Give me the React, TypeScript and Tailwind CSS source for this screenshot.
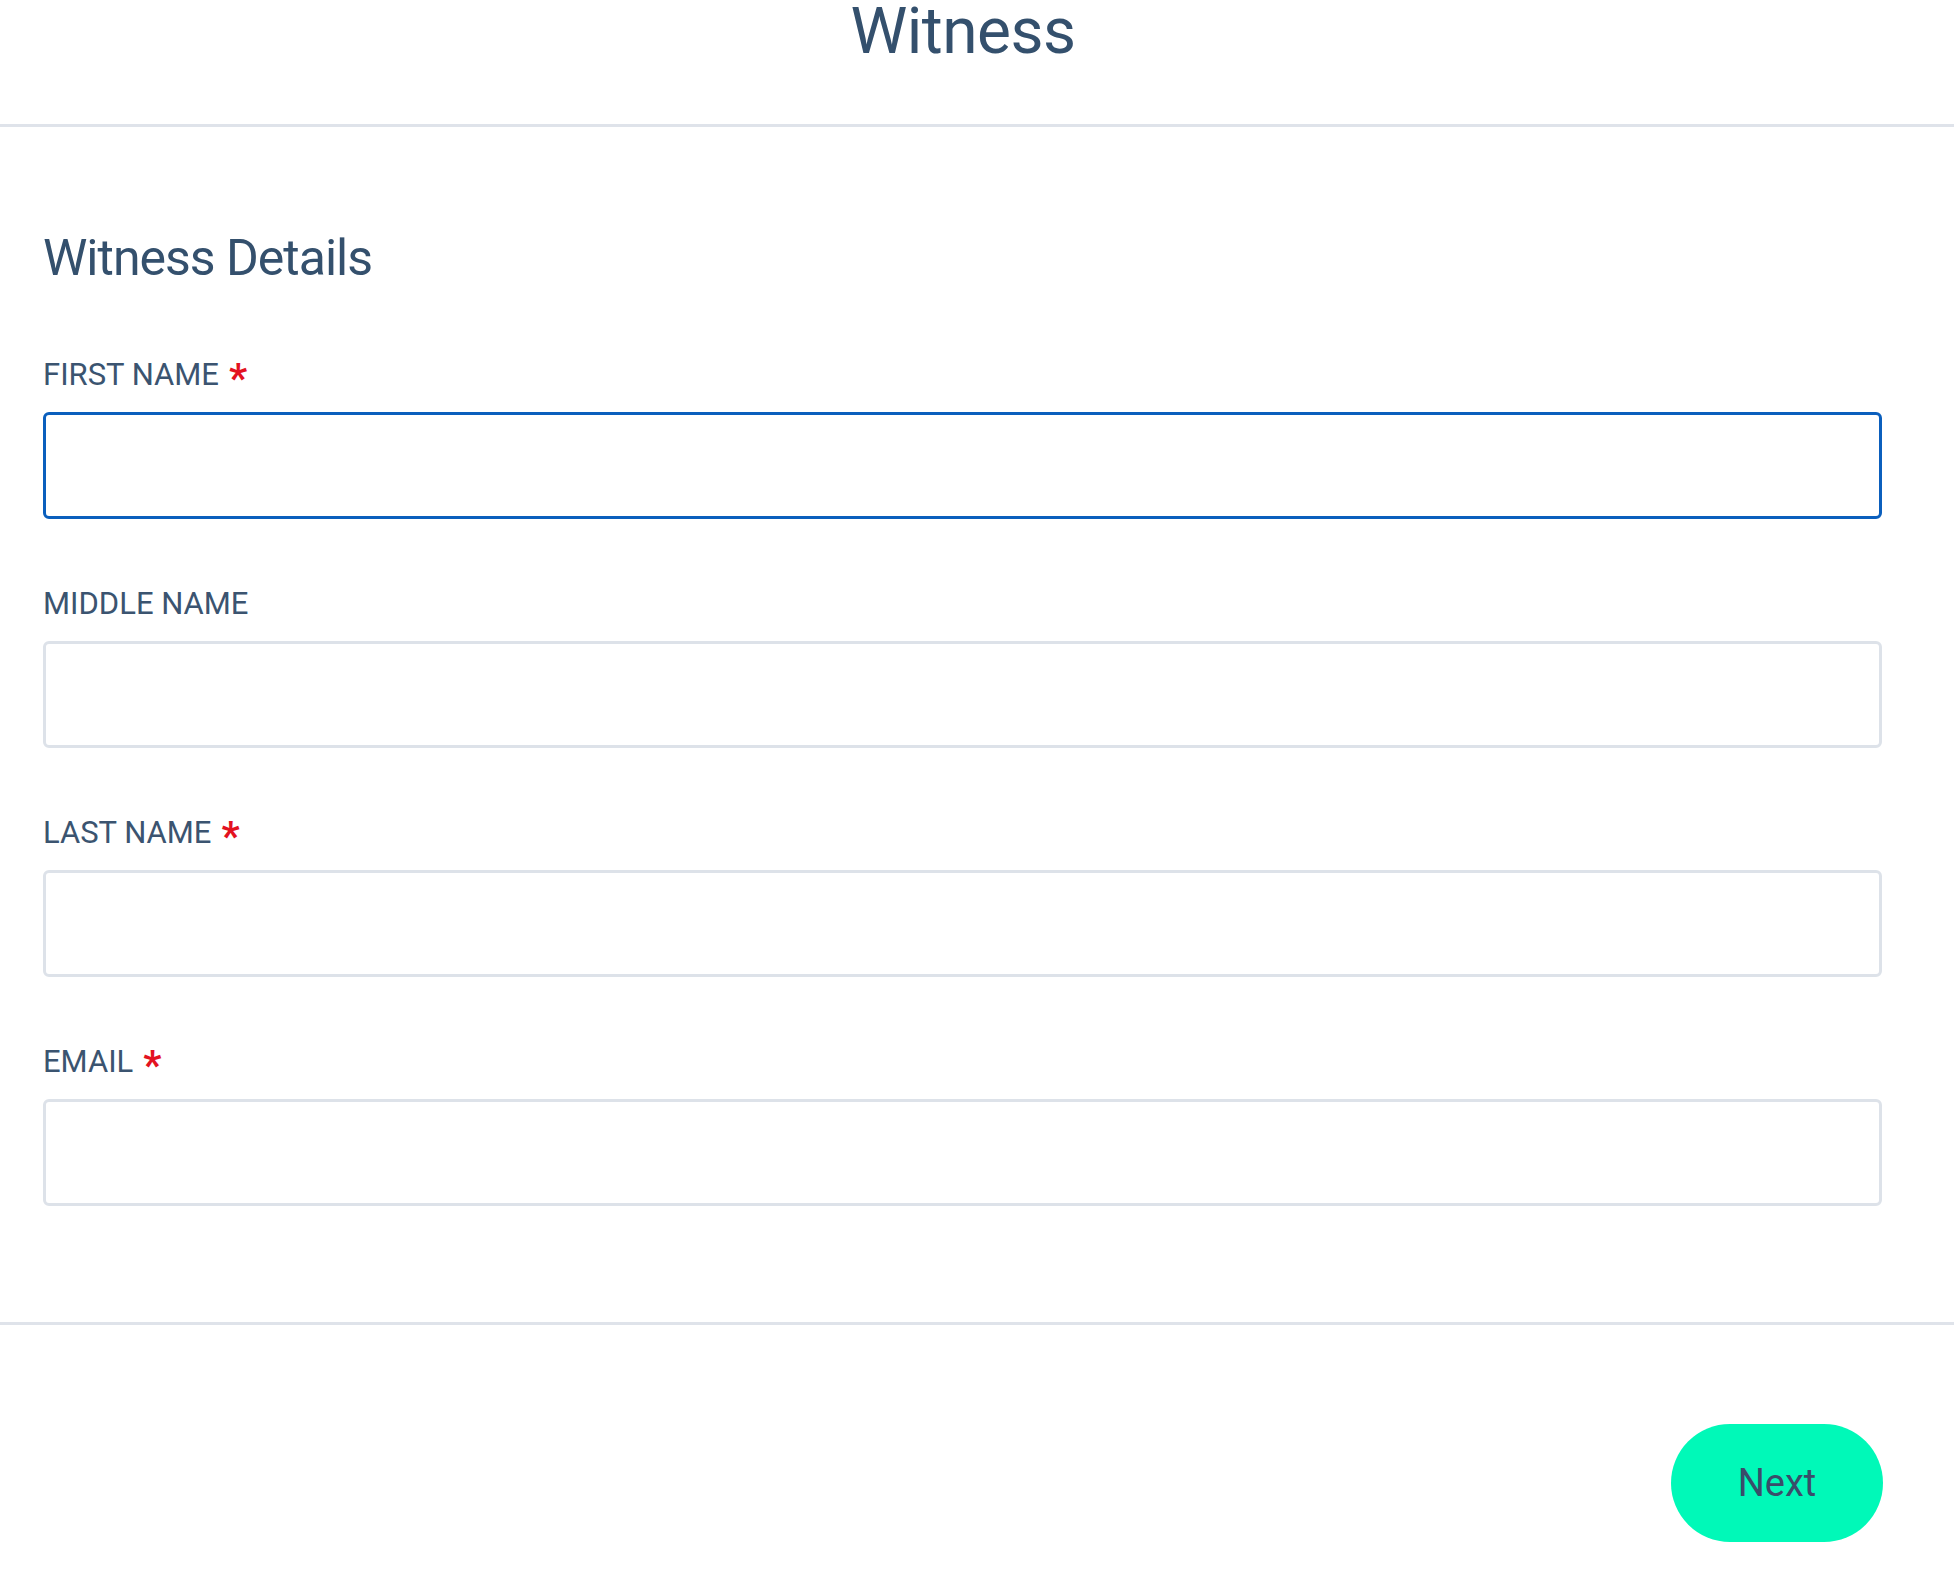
import { useState } from 'react';

const fields = [
  { id: 'firstName', label: 'First Name', required: true },
  { id: 'middleName', label: 'Middle Name', required: false },
  { id: 'lastName', label: 'Last Name', required: true },
  { id: 'email', label: 'Email', required: true },
];

export default function App() {
  const [values, setValues] = useState<Record<string, string>>({});

  return (
    <div className="min-h-screen bg-white font-['Roboto','Inter',sans-serif] text-[#34506d]">
      <header className="h-[127px] border-b-[3px] border-[#dfe3ea] pr-[28px]">
        <h1 className="text-center text-[64px] font-normal leading-[64px] tracking-[-0.5px]">Witness</h1>
      </header>

      <main className="border-b-[3px] border-[#dfe3ea] pb-[116px] pl-[43px] pr-[72px] pt-[106px]">
        <h2 className="mb-[76px] text-[50px] font-normal leading-[50px] tracking-[-1px]">Witness Details</h2>

        <form className="flex flex-col gap-[69px]" onSubmit={(event) => event.preventDefault()}>
          {fields.map((field, index) => (
            <div key={field.id} className="flex flex-col gap-[22px]">
              <label htmlFor={field.id} className="flex items-baseline text-[31px] uppercase leading-[31px] text-[#3b5470]">
                {field.label}
                {field.required && (
                  <span className="relative top-[7px] ml-[10px] text-[40px] font-bold leading-[0] text-[#e3121f]">*</span>
                )}
              </label>
              <input
                id={field.id}
                autoFocus={index === 0}
                value={values[field.id] ?? ''}
                onChange={(event) => setValues((prev) => ({ ...prev, [field.id]: event.target.value }))}
                className={
                  index === 0
                    ? 'h-[107px] w-full rounded-[6px] border-[3px] border-[#0b5fbd] bg-white px-5 text-[31px] outline-none'
                    : 'h-[107px] w-full rounded-[6px] border-[3px] border-[#dde2e9] bg-white px-5 text-[31px] outline-none'
                }
              />
            </div>
          ))}
        </form>
      </main>

      <footer className="flex justify-end pl-[43px] pr-[71px] pt-[99px]">
        <button
          type="button"
          className="h-[118px] w-[212px] rounded-full bg-[#00f9b8] text-[38px] leading-none text-[#3a4d6a]"
        >
          Next
        </button>
      </footer>
    </div>
  );
}
